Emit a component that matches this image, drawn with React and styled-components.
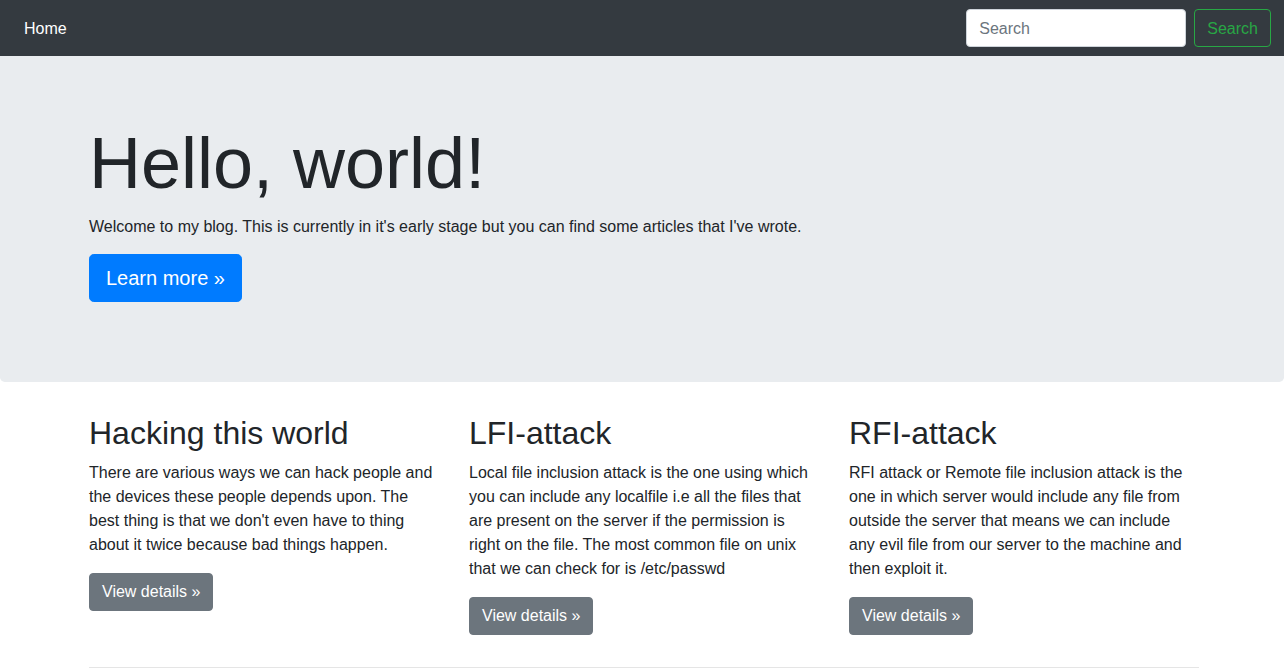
import styled, { createGlobalStyle } from 'styled-components';

const GlobalStyle = createGlobalStyle`
  * { box-sizing: border-box; }
  body {
    margin: 0;
    padding-top: 56px;
    font-family: "Liberation Sans", Arial, sans-serif;
    font-size: 16px;
    line-height: 1.5;
    color: #212529;
    background: #fff;
  }
`;

const Navbar = styled.nav`
  position: fixed;
  top: 0;
  left: 0;
  right: 0;
  height: 56px;
  background: #343a40;
  display: flex;
  align-items: center;
  justify-content: space-between;
  padding: 8px 13px 8px 16px;
  z-index: 10;
`;

const NavLink = styled.a`
  color: #fff;
  text-decoration: none;
  padding: 9px 8px 7px;
`;

const SearchForm = styled.form`
  display: flex;
  align-items: center;
  gap: 8px;
  margin: 0;
`;

const SearchInput = styled.input`
  width: 220px;
  height: 38px;
  padding: 7px 12px 5px;
  font: inherit;
  color: #495057;
  background: #fff;
  border: 1px solid #ced4da;
  border-radius: 4px;
  &::placeholder { color: #6c757d; }
`;

const OutlineButton = styled.button`
  height: 38px;
  padding: 7px 12px 5px;
  font: inherit;
  color: #28a745;
  background: transparent;
  border: 1px solid #28a745;
  border-radius: 4px;
`;

const Jumbotron = styled.div`
  background: #e9ecef;
  padding: 64px 0;
  margin-bottom: 32px;
  border-radius: 0 0 4.8px 4.8px;
`;

const Container = styled.div`
  max-width: 1140px;
  margin: 0 auto;
  padding: 0 15px;
  position: relative;
  left: 2px;
`;

const Display = styled.h1`
  font-size: 72px;
  font-weight: 300;
  line-height: 1.2;
  margin: 0 0 8px;
`;

const Text = styled.p`
  margin: 0 0 16px;
`;

const Lead = styled(Text)`
  padding-top: 1px;
  margin-bottom: 15px;
`;

const Button = styled.a`
  display: inline-block;
  vertical-align: middle;
  color: #fff;
  background: ${({ $variant }) => ($variant === 'secondary' ? '#6c757d' : '#007bff')};
  border: 1px solid ${({ $variant }) => ($variant === 'secondary' ? '#6c757d' : '#007bff')};
  border-radius: ${({ $large }) => ($large ? '4.8px' : '4px')};
  padding: ${({ $large }) => ($large ? '8px 16px' : '6px 12px')};
  font-size: ${({ $large }) => ($large ? '20px' : '16px')};
  line-height: 1.5;
  text-decoration: none;
`;

const Row = styled.div`
  display: grid;
  grid-template-columns: repeat(3, 1fr);
  margin: 0 -15px;
`;

const Col = styled.div`
  padding: 0 15px;
`;

const Heading = styled.h2`
  font-size: 32px;
  font-weight: 500;
  line-height: 1.2;
  margin: 0 0 8px;
`;

const Rule = styled.hr`
  border: 0;
  border-top: 1px solid rgba(0, 0, 0, 0.1);
  margin: 16px 0;
`;

const articles = [
  {
    title: 'Hacking this world',
    body: "There are various ways we can hack people and the devices these people depends upon. The best thing is that we don't even have to thing about it twice because bad things happen.",
  },
  {
    title: 'LFI-attack',
    body: 'Local file inclusion attack is the one using which you can include any localfile i.e all the files that are present on the server if the permission is right on the file. The most common file on unix that we can check for is /etc/passwd',
  },
  {
    title: 'RFI-attack',
    body: 'RFI attack or Remote file inclusion attack is the one in which server would include any file from outside the server that means we can include any evil file from our server to the machine and then exploit it.',
  },
];

const App = () => {
  return (
    <>
      <GlobalStyle />
      <Navbar>
        <NavLink href="#">Home</NavLink>
        <SearchForm onSubmit={(e) => e.preventDefault()}>
          <SearchInput type="text" placeholder="Search" />
          <OutlineButton type="submit">Search</OutlineButton>
        </SearchForm>
      </Navbar>
      <main>
        <Jumbotron>
          <Container>
            <Display>Hello, world!</Display>
            <Lead>Welcome to my blog. This is currently in it's early stage but you can find some articles that I've wrote.</Lead>
            <Text>
              <Button href="#" $large>Learn more »</Button>
            </Text>
          </Container>
        </Jumbotron>
        <Container>
          <Row>
            {articles.map((a) => (
              <Col key={a.title}>
                <Heading>{a.title}</Heading>
                <Text>{a.body}</Text>
                <Text>
                  <Button href="#" $variant="secondary">View details »</Button>
                </Text>
              </Col>
            ))}
          </Row>
          <Rule />
        </Container>
      </main>
    </>
  );
};

export default App;
